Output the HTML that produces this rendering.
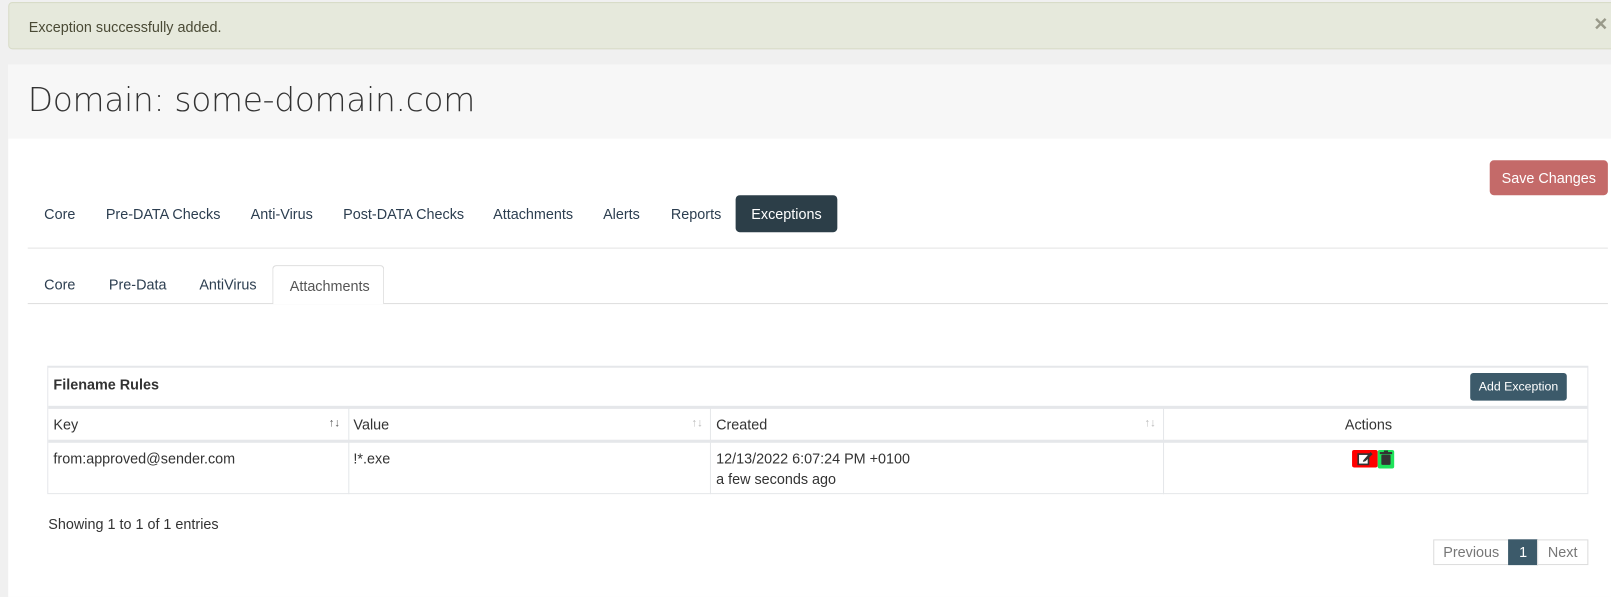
<!DOCTYPE html>
<html><head><meta charset="utf-8"><style>
*{box-sizing:border-box;margin:0;padding:0}
body{width:1611px;height:581px;background:#f0f0f0;font-family:"Liberation Sans",sans-serif;font-size:14px;color:#333;position:relative;overflow:hidden}
#w{position:absolute;left:0;top:0;width:1568px;height:566px;transform:scale(1.0274);transform-origin:0 0}
.abs{position:absolute}
.alert{left:8px;top:2px;width:1600px;height:46px;background:#e6e9dc;border:1px solid #d8dcc8;border-radius:4px;color:#4a4a35;padding:15px 19px;font-size:14px}
.close{left:1551px;top:14px;font-size:17px;font-weight:bold;color:#999a8a}
.panel{left:8px;top:63px;width:1600px;height:518px;background:#fff}
.hdr{left:8px;top:63px;width:1600px;height:72px;background:#f7f7f7}
h1{position:absolute;left:27px;top:78px;font-family:"DejaVu Sans",sans-serif;font-weight:200;font-size:32px;color:#333;letter-spacing:-0.3px}
.save{left:1450px;top:156px;width:115px;height:34px;background:#c46a69;border-radius:4px;color:#fff;font-size:14px;text-align:center;line-height:34px}
.nav a{position:absolute;top:200px;color:#2c3e50;font-size:14px}
.exc{left:716px;top:190px;width:99px;height:36px;background:#2c3e48;border-radius:4px;color:#fff;text-align:center;line-height:36px}
.hr{left:27px;top:241px;width:1538px;height:1px;background:#e4e4e4}
.tabs a{position:absolute;top:269px;color:#2c3e50}
.tabline{left:27px;top:295px;width:1538px;height:1px;background:#ddd}
.acttab{left:265px;top:258px;width:109px;height:38px;background:#fff;border:1px solid #ddd;border-bottom:none;border-radius:4px 4px 0 0;padding:11px 16px;color:#555}
.tbl{left:46px;top:356px;width:1500px;height:125px;border:1px solid #e5e7ea;border-top:2px solid #e5e7ea}
.add{left:1431px;top:363px;width:94px;height:27px;background:#3c5a6a;border-radius:3px;color:#fff;font-size:12px;text-align:center;line-height:27px}
.hl{height:3px;background:#e5e7ea;left:47px;width:1498px}
.vl{width:1px;background:#e5e7ea;top:397px;height:84px}
.t{position:absolute;font-size:14px;color:#333}
.srt{position:absolute;font-size:11px;color:#bbb;top:406px}
.pg{top:525px;height:25px;border:1px solid #ddd;color:#777;text-align:center;line-height:23px;font-size:14px}
</style></head><body><div id="w">
<div class="abs panel"></div>
<div class="abs alert">Exception successfully added.</div>
<div class="abs close">✕</div>
<div class="abs hdr"></div>
<h1>Domain: some-domain.com</h1>
<div class="abs save">Save Changes</div>
<div class="nav">
<a style="left:43px">Core</a><a style="left:103px">Pre-DATA Checks</a><a style="left:244px">Anti-Virus</a><a style="left:334px">Post-DATA Checks</a><a style="left:480px">Attachments</a><a style="left:587px">Alerts</a><a style="left:653px">Reports</a>
</div>
<div class="abs exc">Exceptions</div>
<div class="abs hr"></div>
<div class="abs tabline"></div>
<div class="tabs"><a style="left:43px">Core</a><a style="left:106px">Pre-Data</a><a style="left:194px">AntiVirus</a></div>
<div class="abs acttab">Attachments</div>
<div class="abs tbl"></div>
<div class="t" style="left:52px;top:366px;font-weight:bold">Filename Rules</div>
<div class="abs add">Add Exception</div>
<div class="abs hl" style="top:395px"></div>
<div class="abs hl" style="top:428px"></div>
<div class="abs vl" style="left:339px"></div>
<div class="abs vl" style="left:691px"></div>
<div class="abs vl" style="left:1132px"></div>
<div class="t" style="left:52px;top:405px">Key</div><span class="srt" style="left:320px;color:#555">↑↓</span>
<div class="t" style="left:344px;top:405px">Value</div><span class="srt" style="left:673px">↑↓</span>
<div class="t" style="left:697px;top:405px">Created</div><span class="srt" style="left:1114px">↑↓</span>
<div class="t" style="left:1309px;top:405px">Actions</div>
<div class="t" style="left:52px;top:438px">from:approved@sender.com</div>
<div class="t" style="left:344px;top:438px">!*.exe</div>
<div class="t" style="left:697px;top:438px">12/13/2022 6:07:24 PM +0100</div>
<div class="t" style="left:697px;top:458px">a few seconds ago</div>
<div class="abs" style="left:1316px;top:438px;width:25px;height:17px;background:#f00;border-radius:2px"></div>
<svg class="abs" style="left:1320px;top:438px" width="18" height="16" viewBox="0 0 18 16"><rect x="2" y="4" width="10" height="10" fill="#fff" stroke="#333" stroke-width="1.6"/><path d="M7 10 L14 2 L16 4 L9 11 L6.5 11.5Z" fill="#333"/></svg>
<div class="abs" style="left:1341px;top:438px;width:16px;height:18px;background:#1ee35a;border-radius:2px"></div>
<svg class="abs" style="left:1342px;top:438px" width="14" height="16" viewBox="0 0 14 16"><rect x="1" y="2" width="12" height="2" fill="#333"/><rect x="5" y="0.5" width="4" height="2" fill="#333"/><rect x="2.5" y="4.5" width="9" height="10" rx="1" fill="#333"/></svg>
<div class="t" style="left:47px;top:502px">Showing 1 to 1 of 1 entries</div>
<div class="abs pg" style="left:1395px;width:74px">Previous</div>
<div class="abs pg" style="left:1468px;width:29px;background:#3c5a6a;border-color:#3c5a6a;color:#fff">1</div>
<div class="abs pg" style="left:1496px;width:50px">Next</div>
</div></body></html>
